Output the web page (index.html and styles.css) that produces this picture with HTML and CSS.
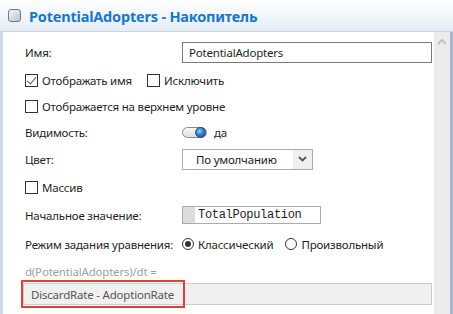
FILE: index.html
```html
<!DOCTYPE html>
<html lang="ru">
<head>
    <meta charset="UTF-8">
    <meta name="viewport" content="width=device-width, initial-scale=1.0">
    <title>PotentialAdopters - Накопитель</title>
    <link rel="stylesheet" href="styles.css">
</head>
<body>
    <main class="window">
        <header class="titlebar">
            <span class="title-icon"></span>
            <h1>PotentialAdopters - Накопитель</h1>
        </header>
        <div class="frame">
            <section class="content">
                <div class="row">
                    <span class="label">Имя:</span>
                    <span class="textbox wide">PotentialAdopters</span>
                </div>
                <div class="row">
                    <span class="check checked"></span>
                    <span class="check-text">Отображать имя</span>
                    <span class="check gap-left"></span>
                    <span class="check-text">Исключить</span>
                </div>
                <div class="row row-sm">
                    <span class="check"></span>
                    <span class="check-text">Отображается на верхнем уровне</span>
                </div>
                <div class="row row-md">
                    <span class="label">Видимость:</span>
                    <span class="toggle"><span class="knob"></span></span>
                    <span class="toggle-text">да</span>
                </div>
                <div class="row">
                    <span class="label">Цвет:</span>
                    <span class="select">
                        <span class="select-value">По умолчанию</span>
                        <span class="select-arrow">
                            <svg width="9" height="6" viewBox="0 0 9 6"><path d="M1 1 L4.5 4.5 L8 1" fill="none" stroke="#555" stroke-width="1.8"/></svg>
                        </span>
                    </span>
                </div>
                <div class="row">
                    <span class="check"></span>
                    <span class="check-text">Массив</span>
                </div>
                <div class="row">
                    <span class="label">Начальное значение:</span>
                    <span class="codebox"><span class="code-mark"></span>TotalPopulation</span>
                </div>
                <div class="row row-lg">
                    <span class="label">Режим задания уравнения:</span>
                    <span class="radio checked"></span>
                    <span class="check-text">Классический</span>
                    <span class="radio gap-left-sm"></span>
                    <span class="check-text">Произвольный</span>
                </div>
                <div class="row row-eq">
                    <span class="muted">d(PotentialAdopters)/dt =</span>
                </div>
                <div class="formula">
                    <span class="formula-text">DiscardRate - AdoptionRate</span>
                    <span class="highlight"></span>
                </div>
            </section>
            <aside class="scrollbar">
                <svg width="10" height="7" viewBox="0 0 10 7"><path d="M1 6 L5 2 L9 6" fill="none" stroke="#c2c2c2" stroke-width="2"/></svg>
            </aside>
        </div>
    </main>
</body>
</html>
```

FILE: styles.css
```css
/* Base */
* {
    margin: 0;
    padding: 0;
    box-sizing: border-box;
}

body {
    font-family: 'Noto Sans', 'Open Sans', Arial, sans-serif;
    font-size: 11.5px;
    letter-spacing: -0.2px;
    color: #1e1e1e;
    background: #ffffff;
    width: 453px;
    height: 314px;
    overflow: hidden;
    white-space: nowrap;
}

.window {
    display: flex;
    flex-direction: column;
    height: 314px;
}

/* Title bar */
.titlebar {
    height: 32px;
    display: flex;
    align-items: center;
    padding-left: 8px;
    background: linear-gradient(#ffffff, #f3f7fb 45%, #e6edf6);
    border-bottom: 1px solid #c9d5e4;
}

.title-icon {
    width: 13px;
    height: 13px;
    border: 1px solid #6e7c8c;
    border-radius: 3px;
    background: linear-gradient(135deg, #f2f5f8, #b9c5d2);
    margin-right: 8px;
}

h1 {
    font-size: 14.5px;
    font-weight: 700;
    color: #1677d2;
    letter-spacing: -0.2px;
}

/* Frame with borders and scrollbar */
.frame {
    flex: 1;
    display: flex;
    border-left: 3px solid #cdd9e8;
    border-right: 3px solid #a3b6d1;
}

.content {
    flex: 1;
    padding: 6px 0 0 22px;
}

.scrollbar {
    width: 16px;
    background: #ececec;
    display: flex;
    justify-content: center;
    padding-top: 6px;
}

/* Rows */
.row {
    height: 28px;
    display: flex;
    align-items: center;
}

.row-sm {
    height: 25px;
}

.row-md {
    height: 26px;
}

.row-lg {
    height: 30px;
}

.row-eq {
    height: 24px;
}

.label {
    width: 157px;
    flex-shrink: 0;
}

/* Inputs */
.textbox {
    height: 21px;
    border: 1px solid #7a7a7a;
    padding: 0 6px;
    display: flex;
    align-items: center;
}

.wide {
    flex: 1;
    margin-right: 2px;
}

.check {
    width: 13px;
    height: 13px;
    border: 1px solid #333;
    background: #fff;
    margin-right: 4px;
    position: relative;
}

.check.checked::after {
    content: '';
    position: absolute;
    left: 3px;
    top: 0px;
    width: 4px;
    height: 8px;
    border: solid #555;
    border-width: 0 1.5px 1.5px 0;
    transform: rotate(40deg);
}

.gap-left {
    margin-left: 15px;
}

.gap-left-sm {
    margin-left: 12px;
}

.toggle {
    width: 25px;
    height: 11px;
    border: 1px solid #8a8a8a;
    border-radius: 6px;
    background: linear-gradient(#fafafa, #dedede);
    position: relative;
    margin-right: 7px;
}

.knob {
    position: absolute;
    right: 0px;
    top: -1px;
    width: 11px;
    height: 11px;
    border-radius: 50%;
    background: radial-gradient(circle at 40% 35%, #9fd0ff, #2a7fd0 45%, #0f4f96);
    border: 1px solid #1b4f86;
}

.select {
    width: 131px;
    height: 21px;
    border: 1px solid #acacac;
    display: flex;
}

.select-value {
    flex: 1;
    padding-left: 13px;
    display: flex;
    align-items: center;
}

.select-arrow {
    width: 19px;
    background: #efefef;
    display: flex;
    align-items: center;
    justify-content: center;
}

.codebox {
    width: 139px;
    height: 18px;
    border: 1px solid #acacac;
    display: flex;
    align-items: center;
    font-family: 'Liberation Mono', monospace;
    font-size: 12px;
    letter-spacing: -0.3px;
}

.code-mark {
    width: 12px;
    height: 16px;
    background: #dcdcdc;
    margin-right: 3px;
}

.radio {
    width: 12px;
    height: 12px;
    border: 1px solid #333;
    border-radius: 50%;
    margin-right: 4px;
    position: relative;
}

.radio.checked::after {
    content: '';
    position: absolute;
    left: 2px;
    top: 2px;
    width: 6px;
    height: 6px;
    border-radius: 50%;
    background: #333;
}

.muted {
    color: #a0a0a0;
}

/* Formula field with red annotation */
.formula {
    position: relative;
    height: 22px;
    margin: 0 2px 0 -2px;
    background: #f0f0f0;
    border: 1px solid #cccccc;
    display: flex;
    align-items: center;
    padding-left: 7px;
    color: #555;
}

.highlight {
    position: absolute;
    left: -3px;
    top: -4px;
    width: 164px;
    height: 28px;
    border: 2px solid #e0403c;
}
```
